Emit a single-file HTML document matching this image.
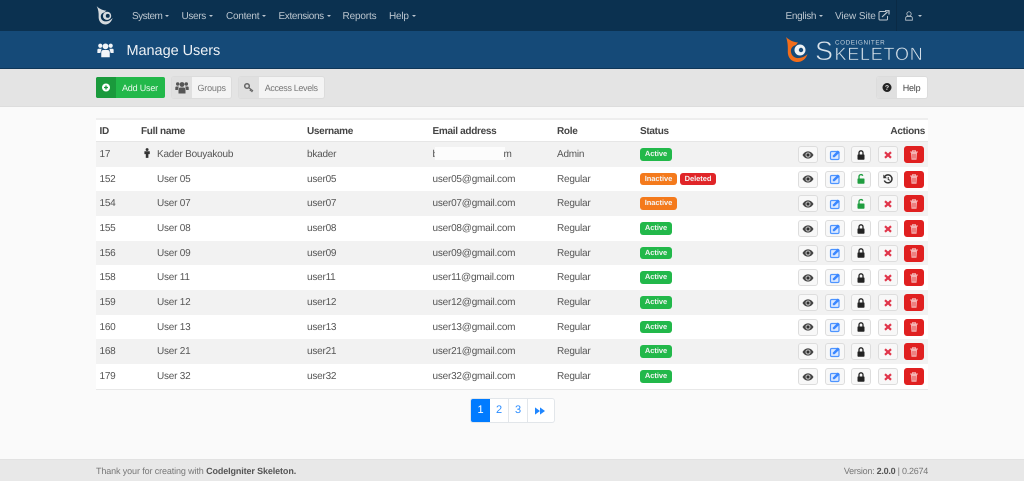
<!DOCTYPE html>
<html><head><meta charset="utf-8"><title>Manage Users</title>
<style>
html,body{margin:0;padding:0}
body{width:1024px;height:481px;overflow:hidden;position:relative;background:#fafafa;font-family:"Liberation Sans",sans-serif;font-size:10px;color:#555;letter-spacing:-.22px;text-rendering:geometricPrecision}
.a{position:absolute;white-space:nowrap}
.nav{color:#bcc6cf;font-size:10px;top:10px;line-height:14px}
.nav i{display:inline-block;border:2px solid transparent;border-top-color:#bcc6cf;border-bottom:0;margin-left:3px;vertical-align:2px}
.row{position:absolute;left:96px;width:832px;height:24.67px;line-height:26px}
.row span.c{position:absolute;top:0;white-space:nowrap}
.g{background:#f2f2f2}
.w{background:#fff}
.th{font-weight:bold;color:#444;top:125px;line-height:14px;letter-spacing:-.3px}
.b{position:absolute;top:4px;height:15px;border:1px solid #ddd;border-radius:3px;background:#f8f8f8;width:18px}
.b svg{position:absolute;left:3px;top:1.5px;width:12px;height:12px}
.b1{left:702px}.b2{left:728.5px}.b3{left:755px}.b4{left:781.5px}.b5{left:808px}
.r{background:#e02020;border-color:#e02020}
.lb{position:absolute;top:6px;height:12.5px;line-height:12.5px;border-radius:3px;color:#f5f5f5;font-size:7.5px;font-weight:bold;text-align:center;letter-spacing:-.05px}
.ac{background:#22b84a;width:32px}
.in{background:#f47a1c;width:37px}
.de{background:#e02528;width:36px}
.tb{position:absolute;top:77px;height:21px;border-radius:2px;overflow:hidden;box-shadow:0 0 0 1px #dcdcdc;font-size:9px;line-height:22px;letter-spacing:-.2px}
.tb b{position:absolute;left:0;top:0;bottom:0;width:20px;background:#e0e0e0}
.tb svg{position:absolute;left:3px;top:4px;width:14px;height:13px}
</style></head><body>
<svg width="0" height="0" style="position:absolute"><defs>
<symbol id="eye" viewBox="0 0 12 12"><path d="M.5 6C2 3.400 3.800 2.400 6 2.400S10 3.400 11.500 6C10 8.600 8.200 9.600 6 9.600S2 8.600.5 6Z" fill="#444"/><circle cx="6" cy="6" r="2.600" fill="#bbb"/><circle cx="6" cy="6" r="1.500" fill="#333"/></symbol>
<symbol id="edit" viewBox="0 0 12 12"><rect x="1.500" y="2.500" width="8.500" height="8" rx="1.300" fill="#dce9ff" stroke="#4d94ff" stroke-width="1.200"/><path d="M3.800 8.300V6.600L8.800 1.500L10.800 3.300L5.600 8.300Z" fill="#3b87ff"/></symbol>
<symbol id="lock" viewBox="0 0 12 12"><path d="M4 6V3.800A2 2 0 0 1 8 3.800V6" fill="none" stroke="#222" stroke-width="1.300"/><rect x="2.500" y="5.500" width="7" height="5.200" rx=".7" fill="#222"/></symbol>
<symbol id="unlock" viewBox="0 0 12 12"><path d="M4 6V3.200A2 2 0 0 1 7.800 2.800" fill="none" stroke="#1f9d3f" stroke-width="1.300"/><rect x="2.500" y="5.500" width="7" height="5.200" rx=".7" fill="#1f9d3f"/></symbol>
<symbol id="x" viewBox="0 0 12 12"><path d="M3 3.200L9 8.800M9 3.200L3 8.800" stroke="#e0354a" stroke-width="2.200" fill="none"/></symbol>
<symbol id="undo" viewBox="0 0 12 12"><path d="M3 3.200A4 4 0 1 1 2.300 7.500" fill="none" stroke="#333" stroke-width="1.500"/><path d="M1.300 1.500V5.200H5Z" fill="#333"/><path d="M6.200 4V6.400L7.800 7.300" fill="none" stroke="#333"/></symbol>
<symbol id="trash" viewBox="0 0 12 12"><path d="M2 3H10M4.500 3V1.800H7.500V3" stroke="#f4b4b4" fill="none"/><path d="M3 3.500H9L8.500 10.800H3.500Z" fill="#f4b4b4"/><path d="M5 5V9.500M7 5V9.500" stroke="#e02020" stroke-width=".7"/></symbol>
<symbol id="users" viewBox="0 0 14 13"><circle cx="7" cy="3.500" r="2.400"/><circle cx="2.700" cy="3" r="1.700"/><circle cx="11.300" cy="3" r="1.700"/><path d="M3.500 12.500V8.300A2 2 0 0 1 5.500 6.500H8.500A2 2 0 0 1 10.500 8.300V12.500Z"/><path d="M.3 9V6.500A1 1 0 0 1 1.300 5.500H3.800L2.800 9ZM13.700 9V6.500A1 1 0 0 0 12.700 5.500H10.200L11.200 9Z"/></symbol>
</defs></svg>

<!-- top nav -->
<div class="a" style="left:0;top:0;width:1024px;height:31px;background:#0b3150"></div>
<svg class="a" style="left:96px;top:6px" width="18" height="19" viewBox="0 0 26 27"><path d="M1 0C5 4 9 6 15 6.500L12 9C8 10 6.500 13 7 16C7.500 20 11 22.500 15 22C18 21.800 21 20.500 24 17C22.500 23 18 26.500 13.500 26.500C7 26.500 3.500 21 3.800 15C4 10 3.500 5 1 0Z" fill="#d5dade"/><circle cx="16" cy="14" r="6" fill="#d5dade"/><circle cx="17" cy="14" r="2.800" fill="#0b3150"/></svg>
<div class="a nav" style="left:132px;letter-spacing:-.5px">System<i></i></div>
<div class="a nav" style="left:181.500px;letter-spacing:-.35px">Users<i></i></div>
<div class="a nav" style="left:226px;letter-spacing:-.25px">Content<i></i></div>
<div class="a nav" style="left:278.500px;letter-spacing:-.36px">Extensions<i></i></div>
<div class="a nav" style="left:342.500px;letter-spacing:-.15px">Reports</div>
<div class="a nav" style="left:389px;letter-spacing:-.2px">Help<i></i></div>
<div class="a nav" style="left:785.500px;letter-spacing:-.3px">English<i></i></div>
<div class="a nav" style="left:835px;letter-spacing:-.08px">View Site</div>
<svg class="a" style="left:878px;top:10px" width="12" height="11" viewBox="0 0 12 11"><path d="M8 1.500H2A1 1 0 0 0 1 2.500V9A1 1 0 0 0 2 10H8.500A1 1 0 0 0 9.500 9V6" fill="none" stroke="#bcc6cf"/><path d="M4 7L9.500 1.800M7 .7H11V4.500" fill="none" stroke="#bcc6cf" stroke-width="1.200"/></svg>
<div class="a" style="left:896px;top:0;width:1px;height:31px;background:#0a2a45"></div>
<svg class="a" style="left:904px;top:11px" width="10" height="10" viewBox="0 0 11 12"><circle cx="5.500" cy="3.500" r="2.600" fill="none" stroke="#bcc6cf"/><path d="M1.500 11V8.500A2 2 0 0 1 3.500 6.500H7.500A2 2 0 0 1 9.500 8.500V11Z" fill="none" stroke="#bcc6cf"/></svg>
<div class="a" style="left:918px;top:15px;border:2px solid transparent;border-top-color:#bcc6cf;border-bottom:0"></div>

<!-- header -->
<div class="a" style="left:0;top:31px;width:1024px;height:37px;background:#154a78;border-bottom:1px solid #0e3658"></div>
<svg class="a" style="left:97px;top:42px;fill:#f2f5f8" width="17" height="16" viewBox="0 0 14 13"><use href="#users"/></svg>
<div class="a" style="left:126.500px;top:42px;color:#eef2f6;font-size:14.500px;line-height:19px;letter-spacing:-.05px">Manage Users</div>
<svg class="a" style="left:784px;top:36px;letter-spacing:0" width="145" height="28" viewBox="0 0 145 28">
<path d="M2 1C5 4 9 6 14 6.500L12 9C8 10 6.500 13 7 16C7.500 20 11 22.500 15 22C18 21.800 21 20.500 23.500 18C22 23 18 26 13.500 26C7 26 3.500 21 3.800 15C4 10 3.500 5 2 1Z" fill="#f26d1a"/>
<circle cx="16" cy="14" r="5.500" fill="#eef2f5"/><circle cx="17" cy="14" r="2.200" fill="#154a78"/>
<text x="31" y="24" font-family="Liberation Sans" font-size="27" fill="#d8e2ea" stroke="#154a78" stroke-width=".7">S</text>
<text x="51" y="8.700" font-family="Liberation Sans" font-size="6.300" fill="#c2d0dc" letter-spacing=".6">CODEIGNITER</text>
<text x="50.500" y="24" font-family="Liberation Sans" font-size="18" fill="#d8e2ea" stroke="#154a78" stroke-width=".5" letter-spacing=".75">KELETON</text>
</svg>

<!-- toolbar -->
<div class="a" style="left:0;top:69px;width:1024px;height:37px;background:#e4e4e4;border-bottom:1px solid #ddd"></div>
<div class="tb" style="left:96px;width:69px;background:#22b84a;color:#e8f8ec;box-shadow:none"><b style="background:#1a9a3c"></b>
<svg viewBox="0 0 14 13" style="top:4px"><circle cx="7" cy="6.500" r="4" fill="#fff"/><path d="M7 4.500V8.500M5 6.500H9" stroke="#1a9a3c" stroke-width="1.300"/></svg><span class="a" style="left:26px">Add User</span></div>
<div class="tb" style="left:172px;width:59px;background:#f4f4f4;color:#777"><b></b><svg style="fill:#555" viewBox="0 0 14 13"><use href="#users"/></svg><span class="a" style="left:25.500px">Groups</span></div>
<div class="tb" style="left:239px;width:85px;background:#f4f4f4;color:#777;letter-spacing:-.35px"><b></b><svg viewBox="0 0 14 13"><circle cx="5" cy="5" r="2.300" fill="none" stroke="#666" stroke-width="1.500"/><path d="M6.500 6.500L11 10M9 8.500L8 10M10.500 9.500L9.500 11" stroke="#666" stroke-width="1.300" fill="none"/></svg><span class="a" style="left:25.700px">Access Levels</span></div>
<div class="tb" style="left:877px;width:50px;background:#fff;color:#444"><b style="width:20px"></b><svg viewBox="0 0 14 13" style="letter-spacing:0"><circle cx="7" cy="6.500" r="4.500" fill="#222"/><text x="7" y="9.200" font-size="7" font-weight="bold" fill="#e0e0e0" text-anchor="middle" font-family="Liberation Sans">?</text></svg><span class="a" style="left:25.700px">Help</span></div>

<!-- table -->
<div class="a" style="left:96px;top:118px;width:832px;height:24px;background:#fff;border-top:2px solid #eee;box-sizing:border-box;border-bottom:1px solid #e6e6e6"></div>
<div class="a th" style="left:99.500px">ID</div>
<div class="a th" style="left:141px">Full name</div>
<div class="a th" style="left:307px">Username</div>
<div class="a th" style="left:432.500px">Email address</div>
<div class="a th" style="left:557px">Role</div>
<div class="a th" style="left:640px">Status</div>
<div class="a th" style="right:99px">Actions</div>

<div class="row g" style="top:142px"><span class="c" style="left:3.500px">17</span><svg class="a" style="left:48px;top:6px" width="6.200" height="10" viewBox="0 0 8 13"><circle cx="4" cy="2" r="1.900" fill="#333"/><path d="M.5 4.300H7.500V8H5.700V12.800H2.300V8H.5Z" fill="#333"/></svg><span class="c" style="left:61px">Kader Bouyakoub</span><span class="c" style="left:211px">bkader</span><span class="c" style="left:336.500px">b</span><span class="a" style="left:339px;top:5px;width:70px;height:13px;background:#fcfcfc"></span><span class="c" style="left:407.500px">m</span><span class="c" style="left:461px">Admin</span><span class="lb ac" style="left:544px">Active</span>
<span class="b b1"><svg><use href="#eye"/></svg></span><span class="b b2"><svg><use href="#edit"/></svg></span><span class="b b3"><svg><use href="#lock"/></svg></span><span class="b b4"><svg><use href="#x"/></svg></span><span class="b b5 r"><svg><use href="#trash"/></svg></span></div>

<div class="row w" style="top:166.670px"><span class="c" style="left:3.500px">152</span><span class="c" style="left:61px">User 05</span><span class="c" style="left:211px">user05</span><span class="c" style="left:336.500px">user05@gmail.com</span><span class="c" style="left:461px">Regular</span><span class="lb in" style="left:544px">Inactive</span><span class="lb de" style="left:584px">Deleted</span>
<span class="b b1"><svg><use href="#eye"/></svg></span><span class="b b2"><svg><use href="#edit"/></svg></span><span class="b b3"><svg><use href="#unlock"/></svg></span><span class="b b4"><svg><use href="#undo"/></svg></span><span class="b b5 r"><svg><use href="#trash"/></svg></span></div>

<div class="row g" style="top:191.330px"><span class="c" style="left:3.500px">154</span><span class="c" style="left:61px">User 07</span><span class="c" style="left:211px">user07</span><span class="c" style="left:336.500px">user07@gmail.com</span><span class="c" style="left:461px">Regular</span><span class="lb in" style="left:544px">Inactive</span>
<span class="b b1"><svg><use href="#eye"/></svg></span><span class="b b2"><svg><use href="#edit"/></svg></span><span class="b b3"><svg><use href="#unlock"/></svg></span><span class="b b4"><svg><use href="#x"/></svg></span><span class="b b5 r"><svg><use href="#trash"/></svg></span></div>

<div class="row w" style="top:216px"><span class="c" style="left:3.500px">155</span><span class="c" style="left:61px">User 08</span><span class="c" style="left:211px">user08</span><span class="c" style="left:336.500px">user08@gmail.com</span><span class="c" style="left:461px">Regular</span><span class="lb ac" style="left:544px">Active</span>
<span class="b b1"><svg><use href="#eye"/></svg></span><span class="b b2"><svg><use href="#edit"/></svg></span><span class="b b3"><svg><use href="#lock"/></svg></span><span class="b b4"><svg><use href="#x"/></svg></span><span class="b b5 r"><svg><use href="#trash"/></svg></span></div>

<div class="row g" style="top:240.670px"><span class="c" style="left:3.500px">156</span><span class="c" style="left:61px">User 09</span><span class="c" style="left:211px">user09</span><span class="c" style="left:336.500px">user09@gmail.com</span><span class="c" style="left:461px">Regular</span><span class="lb ac" style="left:544px">Active</span>
<span class="b b1"><svg><use href="#eye"/></svg></span><span class="b b2"><svg><use href="#edit"/></svg></span><span class="b b3"><svg><use href="#lock"/></svg></span><span class="b b4"><svg><use href="#x"/></svg></span><span class="b b5 r"><svg><use href="#trash"/></svg></span></div>

<div class="row w" style="top:265.330px"><span class="c" style="left:3.500px">158</span><span class="c" style="left:61px">User 11</span><span class="c" style="left:211px">user11</span><span class="c" style="left:336.500px">user11@gmail.com</span><span class="c" style="left:461px">Regular</span><span class="lb ac" style="left:544px">Active</span>
<span class="b b1"><svg><use href="#eye"/></svg></span><span class="b b2"><svg><use href="#edit"/></svg></span><span class="b b3"><svg><use href="#lock"/></svg></span><span class="b b4"><svg><use href="#x"/></svg></span><span class="b b5 r"><svg><use href="#trash"/></svg></span></div>

<div class="row g" style="top:290px"><span class="c" style="left:3.500px">159</span><span class="c" style="left:61px">User 12</span><span class="c" style="left:211px">user12</span><span class="c" style="left:336.500px">user12@gmail.com</span><span class="c" style="left:461px">Regular</span><span class="lb ac" style="left:544px">Active</span>
<span class="b b1"><svg><use href="#eye"/></svg></span><span class="b b2"><svg><use href="#edit"/></svg></span><span class="b b3"><svg><use href="#lock"/></svg></span><span class="b b4"><svg><use href="#x"/></svg></span><span class="b b5 r"><svg><use href="#trash"/></svg></span></div>

<div class="row w" style="top:314.670px"><span class="c" style="left:3.500px">160</span><span class="c" style="left:61px">User 13</span><span class="c" style="left:211px">user13</span><span class="c" style="left:336.500px">user13@gmail.com</span><span class="c" style="left:461px">Regular</span><span class="lb ac" style="left:544px">Active</span>
<span class="b b1"><svg><use href="#eye"/></svg></span><span class="b b2"><svg><use href="#edit"/></svg></span><span class="b b3"><svg><use href="#lock"/></svg></span><span class="b b4"><svg><use href="#x"/></svg></span><span class="b b5 r"><svg><use href="#trash"/></svg></span></div>

<div class="row g" style="top:339.330px"><span class="c" style="left:3.500px">168</span><span class="c" style="left:61px">User 21</span><span class="c" style="left:211px">user21</span><span class="c" style="left:336.500px">user21@gmail.com</span><span class="c" style="left:461px">Regular</span><span class="lb ac" style="left:544px">Active</span>
<span class="b b1"><svg><use href="#eye"/></svg></span><span class="b b2"><svg><use href="#edit"/></svg></span><span class="b b3"><svg><use href="#lock"/></svg></span><span class="b b4"><svg><use href="#x"/></svg></span><span class="b b5 r"><svg><use href="#trash"/></svg></span></div>

<div class="row w" style="top:364px;border-bottom:1px solid #e8e8e8"><span class="c" style="left:3.500px">179</span><span class="c" style="left:61px">User 32</span><span class="c" style="left:211px">user32</span><span class="c" style="left:336.500px">user32@gmail.com</span><span class="c" style="left:461px">Regular</span><span class="lb ac" style="left:544px">Active</span>
<span class="b b1"><svg><use href="#eye"/></svg></span><span class="b b2"><svg><use href="#edit"/></svg></span><span class="b b3"><svg><use href="#lock"/></svg></span><span class="b b4"><svg><use href="#x"/></svg></span><span class="b b5 r"><svg><use href="#trash"/></svg></span></div>

<!-- pagination -->
<div class="a" style="left:471px;top:399px;width:82.500px;height:23px;background:#fff;border-radius:2px;box-shadow:0 0 0 1px #e2e6ea"></div>
<div class="a" style="left:471px;top:399px;width:19px;height:23px;background:#007bff;border-radius:2px 0 0 2px;color:#fff;text-align:center;line-height:23px;font-size:11px">1</div>
<div class="a" style="left:490px;top:399px;width:18px;height:23px;border-right:1px solid #e2e6ea;color:#2a8cff;text-align:center;line-height:23px;font-size:11px">2</div>
<div class="a" style="left:509px;top:399px;width:18px;height:23px;border-right:1px solid #e2e6ea;color:#2a8cff;text-align:center;line-height:23px;font-size:11px">3</div>
<svg class="a" style="left:535px;top:407px" width="10" height="8" viewBox="0 0 11 8"><path d="M0 0L5.500 4L0 8ZM5.500 0L11 4L5.500 8Z" fill="#1f86ff"/></svg>

<!-- footer -->
<div class="a" style="left:0;top:459px;width:1024px;height:22px;background:#e8e8e8;border-top:1px solid #e2e2e2;box-sizing:border-box"></div>
<div class="a" style="left:96px;top:465px;font-size:9px;line-height:12px;color:#777;letter-spacing:-.12px">Thank your for creating with <b style="color:#555">CodeIgniter Skeleton.</b></div>
<div class="a" style="right:96px;top:465px;font-size:9px;line-height:12px;color:#777;letter-spacing:-.25px">Version: <b style="color:#555">2.0.0</b> | 0.2674</div>
</body></html>
